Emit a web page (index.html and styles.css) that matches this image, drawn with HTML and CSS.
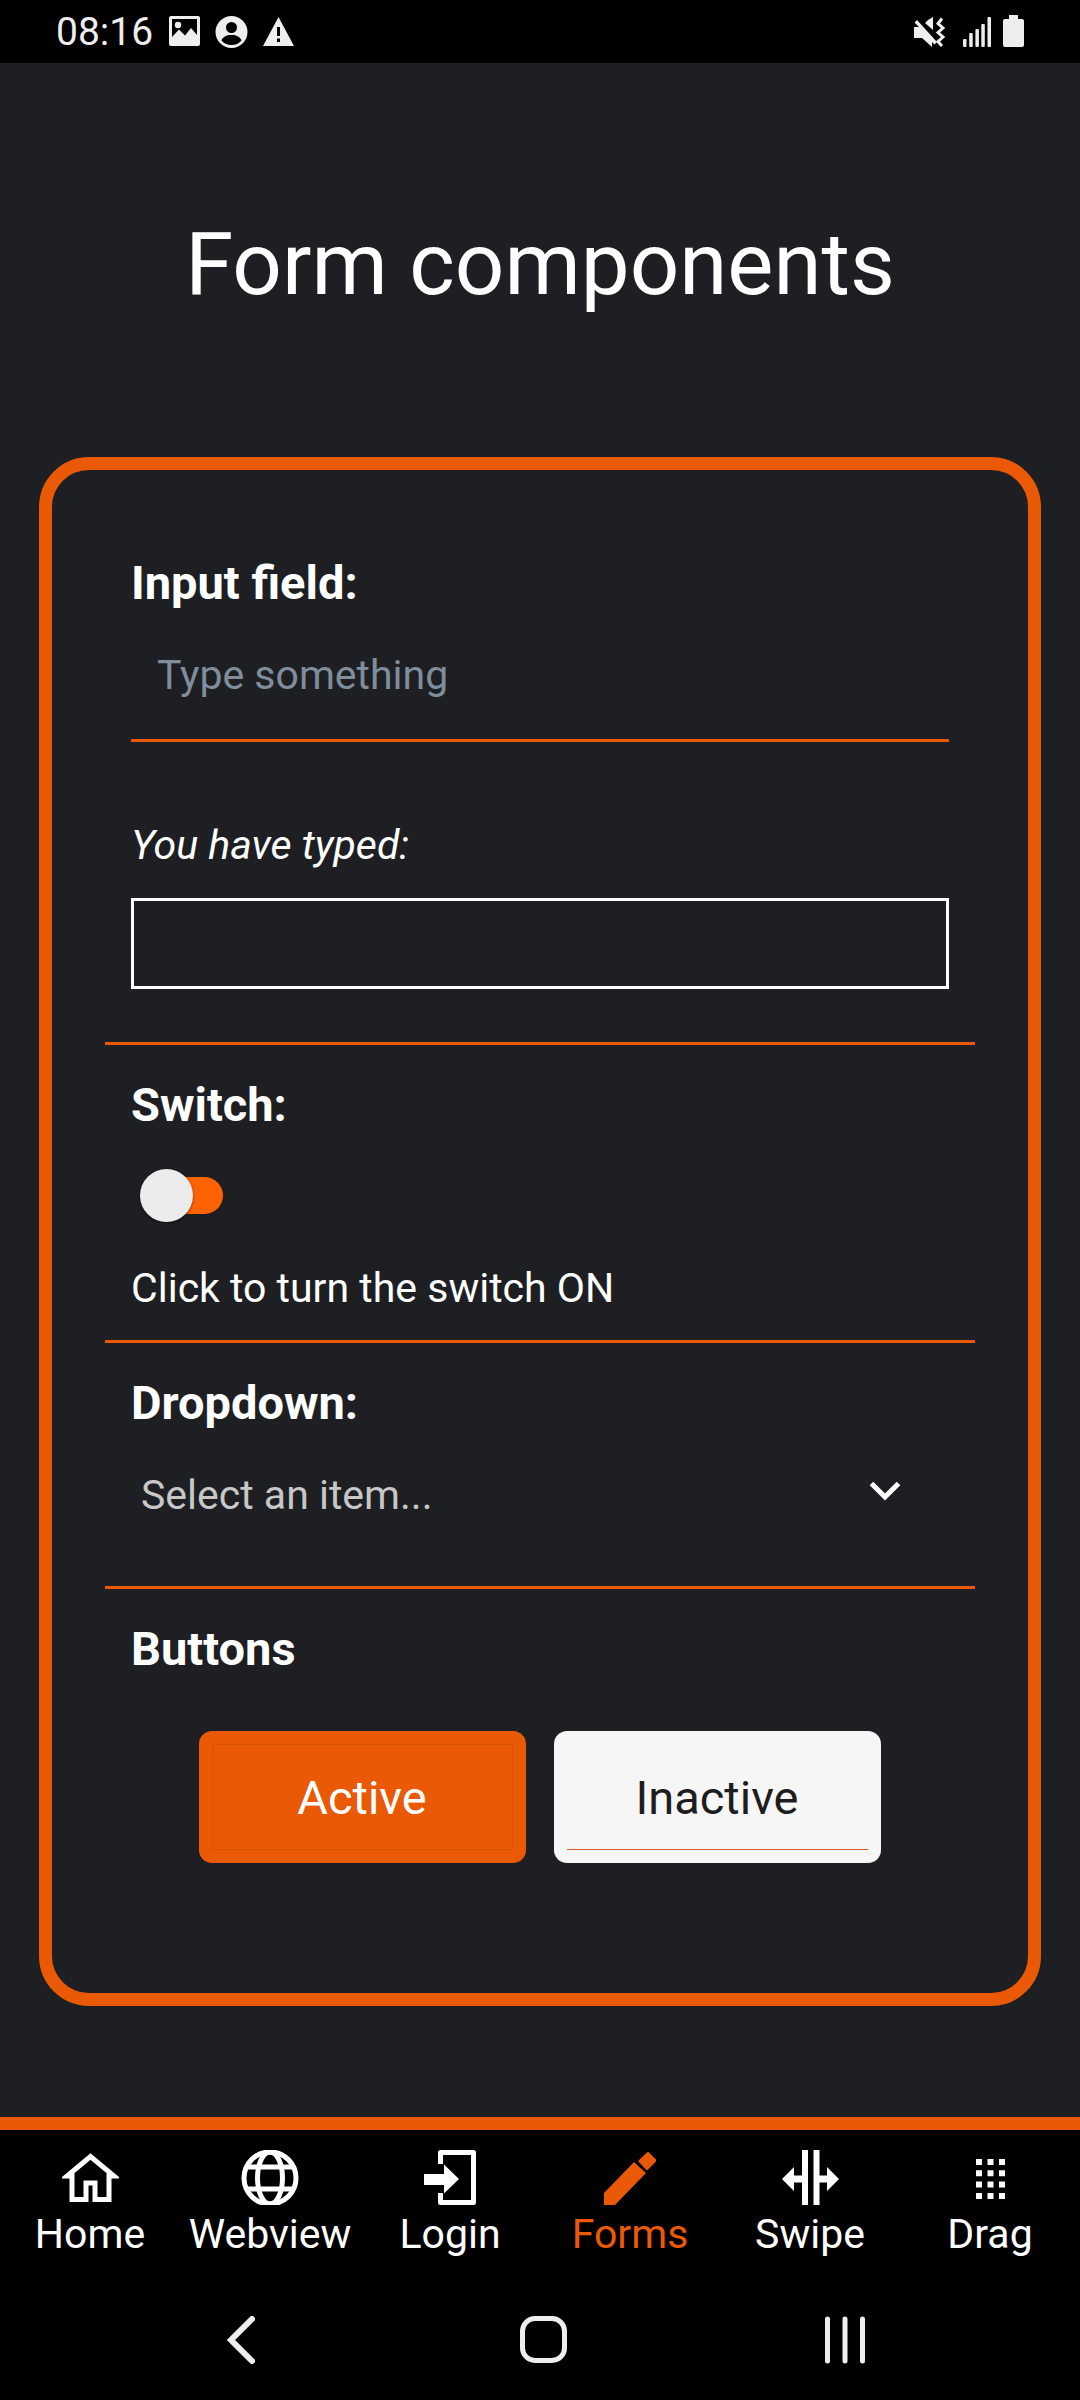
FILE: index.html
```html
<!DOCTYPE html>
<html lang="en">
<head>
<meta charset="utf-8">
<title>Form components</title>
<link rel="stylesheet" href="styles.css">
</head>
<body>
<div class="status">
  <div class="status-left">
    <span class="time">08:16</span>
    <svg class="ic-image" viewBox="0 0 31 30"><path fill-rule="evenodd" d="M2 0H29a2 2 0 0 1 2 2V28a2 2 0 0 1-2 2H2a2 2 0 0 1-2-2V2a2 2 0 0 1 2-2ZM3 3V21L10 13.500 16 19.500 22 12 28 19V3Z"/><circle cx="9" cy="9" r="3.200"/></svg>
    <svg class="ic-person" viewBox="0 0 33 32"><path fill-rule="evenodd" d="M16.500 0a16 16 0 1 1 0 32a16 16 0 1 1 0-32ZM16.500 6a5.500 5.500 0 1 0 0 11a5.500 5.500 0 1 0 0-11ZM16.500 19C11.500 19 7.500 21 6.500 24.500C9 27.500 12.500 29 16.500 29S24 27.500 26.500 24.500C25.500 21 21.500 19 16.500 19Z"/></svg>
    <svg class="ic-warn" viewBox="0 0 31 29"><path fill-rule="evenodd" d="M15.500 0L31 29H0ZM14 10V19H17V10ZM14 21.500V25H17V21.500Z"/></svg>
  </div>
  <div class="status-right">
    <svg class="ic-mute" viewBox="0 0 32 30"><path d="M0 10H5L0.500 5.500 3 3 23 25 20.500 27.500 18 25V30L8 21H0ZM14 3L19 0V13L11 6Z"/><path class="squiggle" d="M28 1.500L24 6.500 29 11 24 15.500 29 20 24 24.500 28 29"/></svg>
    <svg class="ic-signal" viewBox="0 0 28 30"><rect x="0" y="22" width="3.500" height="8" rx="1"/><rect x="6.200" y="16" width="3.500" height="14" rx="1"/><rect x="12.400" y="12" width="3.500" height="18" rx="1"/><rect x="18.300" y="7" width="3.500" height="23" rx="1"/><rect x="24.500" y="0" width="3.500" height="30" rx="1"/></svg>
    <svg class="ic-battery" viewBox="0 0 21 32"><path d="M6 0H15V4H19a2 2 0 0 1 2 2V30a2 2 0 0 1-2 2H2a2 2 0 0 1-2-2V6a2 2 0 0 1 2-2H6Z"/></svg>
  </div>
</div>

<main class="page">
  <h1 class="title">Form components</h1>
  <section class="card">
    <div class="group group-input">
      <div class="label">Input field:</div>
      <div class="field"><span class="placeholder">Type something</span></div>
      <div class="typed-label">You have typed:</div>
      <div class="typed-box"></div>
    </div>
    <div class="group group-switch">
      <div class="label">Switch:</div>
      <div class="switch"><span class="track"></span><span class="thumb"></span></div>
      <div class="body-text">Click to turn the switch ON</div>
    </div>
    <div class="group group-dropdown">
      <div class="label">Dropdown:</div>
      <div class="select">
        <span class="select-text">Select an item...</span>
        <svg class="chevron" viewBox="0 0 32 20"><path d="M2.500 2.500L16 16 29.500 2.500"/></svg>
      </div>
    </div>
    <div class="group group-buttons">
      <div class="label">Buttons</div>
      <div class="buttons">
        <div class="btn btn-active"><span class="btn-inner">Active</span></div>
        <div class="btn btn-inactive"><span class="btn-inner">Inactive</span></div>
      </div>
    </div>
  </section>
</main>

<nav class="tabs">
  <div class="tab">
    <svg class="ic-home" viewBox="0 0 57 55"><path d="M10 49.500V26H5L28.500 6.500 52 26H47V49.500H33V33H24V49.500Z"/></svg>
    <span>Home</span>
  </div>
  <div class="tab">
    <svg class="ic-globe" viewBox="0 0 58 55"><circle cx="29" cy="28" r="26"/><ellipse cx="29" cy="28" rx="12.500" ry="26"/><path d="M6 17H52M6 39H52"/></svg>
    <span>Webview</span>
  </div>
  <div class="tab">
    <svg class="ic-login" viewBox="0 0 54 55"><path class="frame" d="M17.500 14V2.500H50.500V52.500H17.500V43"/><path class="fill" d="M1 24H21V14.500L36 29 21 43.500V35H1Z"/></svg>
    <span>Login</span>
  </div>
  <div class="tab tab-active">
    <svg class="ic-pencil" viewBox="0 0 52 55"><path d="M0 43L30 12 42 23 11 55H0Z"/><path class="cap" d="M36 11L44 3.500 51 10.500 43 18.500Z"/></svg>
    <span>Forms</span>
  </div>
  <div class="tab">
    <svg class="ic-swipe" viewBox="0 0 57 55"><path d="M20 0H26V55H20ZM31.500 0H37.500V55H31.500ZM0 29L12 17V25.500H20V32.500H12V41ZM57 29L45 17V25.500H37.500V32.500H45V41Z"/></svg>
    <span>Swipe</span>
  </div>
  <div class="tab">
    <svg class="ic-drag" viewBox="0 0 29 55"><path d="M0 9H6V15H0ZM11.500 9H17.500V15H11.500ZM23 9H29V15H23ZM0 20.300H6V26.300H0ZM11.500 20.300H17.500V26.300H11.500ZM23 20.300H29V26.300H23ZM0 31.600H6V37.600H0ZM11.500 31.600H17.500V37.600H11.500ZM23 31.600H29V37.600H23ZM0 43H6V49H0ZM11.500 43H17.500V49H11.500ZM23 43H29V49H23Z"/></svg>
    <span>Drag</span>
  </div>
</nav>

<div class="sysnav">
  <svg class="sys-back" viewBox="0 0 28 48"><path d="M25 3L4 24 25 45"/></svg>
  <span class="sys-home"></span>
  <svg class="sys-recent" viewBox="0 0 40 48"><path d="M2.500 3V45M20 3V45M37.500 3V45"/></svg>
</div>
</body>
</html>
```
FILE: styles.css
```css
* { box-sizing: border-box; }
html, body { margin: 0; padding: 0; }
body {
  width: 1080px;
  height: 2400px;
  background: #1e1f23;
  color: #fff;
  font-family: Roboto, "Liberation Sans", sans-serif;
  display: flex;
  flex-direction: column;
  overflow: hidden;
}

/* status bar */
.status {
  height: 63px;
  background: #000;
  display: flex;
  justify-content: space-between;
  align-items: flex-start;
  flex: none;
}
.status svg { fill: #eee; display: block; flex: none; }
.status-left { display: flex; align-items: flex-start; padding: 16px 0 0 56px; }
.status-right { display: flex; align-items: flex-start; padding: 15px 56px 0 0; }
.time { font-size: 39px; line-height: 32px; color: #eee; width: 113px; }
.ic-image { width: 31px; height: 30px; }
.ic-person { width: 33px; height: 32px; margin-left: 15px; }
.ic-warn { width: 31px; height: 29px; margin: 1px 0 0 15px; }
.ic-mute { width: 32px; height: 30px; margin-top: 2px; }
.ic-mute .squiggle { fill: none; stroke: #eee; stroke-width: 3; }
.ic-signal { width: 28px; height: 30px; margin: 2px 0 0 17px; }
.ic-battery { width: 21px; height: 32px; margin-left: 12px; }

/* page */
.page { flex: 1; display: flex; flex-direction: column; align-items: center; }
.title {
  margin: 151px 0 143px;
  font-size: 87px;
  line-height: 100px;
  font-weight: 400;
  text-align: center;
}
.card {
  width: 1002px;
  height: 1549px;
  border: 13px solid #ea5906;
  border-radius: 50px;
  padding: 77px 53px 0;
}
.group { padding: 0 26px; }
.group + .group { border-top: 3px solid #ea5906; }
.label { font-size: 47px; line-height: 52px; font-weight: 700; }

.group-input { height: 495px; padding-top: 10px; }
.field {
  height: 133px;
  border-bottom: 3px solid #ea5906;
  padding: 41px 0 0 26px;
}
.placeholder { font-size: 41px; line-height: 50px; color: #7f8d9c; display: block; }
.typed-label { margin-top: 80px; font-size: 41px; line-height: 46px; font-style: italic; }
.typed-box { margin-top: 30px; height: 91px; border: 3px solid #fff; }

.group-switch { height: 298px; padding-top: 34px; }
.switch { position: relative; width: 90px; height: 52px; margin: 38px 0 0 9px; }
.track {
  position: absolute;
  left: 20px;
  top: 8px;
  width: 63px;
  height: 37px;
  border-radius: 19px;
  background: #ff6200;
}
.thumb {
  position: absolute;
  left: 0;
  top: 0;
  width: 53px;
  height: 53px;
  border-radius: 50%;
  background: #ececec;
  box-shadow: 0 1px 3px rgba(0,0,0,.5);
}
.body-text { margin-top: 42px; font-size: 41px; line-height: 50px; }

.group-dropdown { height: 246px; padding-top: 34px; }
.select { display: flex; justify-content: space-between; align-items: flex-start; padding: 41px 48px 0 10px; }
.select-text { font-size: 41px; line-height: 50px; color: #c7c7c7; }
.chevron { width: 32px; height: 20px; margin-top: 11px; fill: none; stroke: #fff; stroke-width: 5; flex: none; }

.group-buttons { padding-top: 34px; }
.buttons { display: flex; justify-content: center; gap: 28px; margin-top: 56px; padding-right: 1px; }
.btn {
  width: 327px;
  height: 132px;
  border-radius: 13px;
  padding: 13px;
  display: flex;
}
.btn-inner {
  flex: 1;
  display: flex;
  align-items: center;
  justify-content: center;
  padding-top: 2px;
  font-size: 47px;
  line-height: 54px;
}
.btn-active { background: #ea5906; color: #fff; }
.btn-active .btn-inner { border: 1px solid #d65408; }
.btn-inactive { background: #f6f6f6; color: #1d1d1d; }
.btn-inactive .btn-inner { border-bottom: 1px solid #d65a1f; }

/* tabs */
.tabs {
  flex: none;
  height: 182px;
  background: #000;
  border-top: 13px solid #ea5906;
  display: grid;
  grid-template-columns: repeat(6, 180px);
  padding-top: 20px;
}
.tab {
  display: flex;
  flex-direction: column;
  align-items: center;
  font-size: 41px;
  line-height: 48px;
  color: #fff;
}
.tab svg { display: block; height: 55px; flex: none; margin-bottom: 5px; }
.tab span { display: block; }
.tab-active { color: #ea5906; }
.ic-home { width: 57px; fill: none; stroke: #fff; stroke-width: 5; }
.ic-globe { width: 58px; fill: none; stroke: #fff; stroke-width: 5; }
.ic-login { width: 54px; }
.ic-login .frame { fill: none; stroke: #fff; stroke-width: 5; stroke-linejoin: round; }
.ic-login .fill { fill: #fff; }
.ic-pencil { width: 52px; fill: #ea5906; }
.ic-pencil .cap { stroke: #ea5906; stroke-width: 3; stroke-linejoin: round; }
.ic-swipe { width: 57px; fill: #fff; }
.ic-drag { width: 29px; fill: #fff; }

/* system nav */
.sysnav {
  flex: none;
  height: 101px;
  background: #000;
  display: flex;
  align-items: flex-start;
  padding: 17px 0 0 227px;
}
.sys-back { width: 28px; height: 48px; fill: none; stroke: #eee; stroke-width: 6; stroke-linecap: round; flex: none; }
.sys-home {
  width: 47px;
  height: 47px;
  margin: 0 0 0 265px;
  border: 5px solid #eee;
  border-radius: 15px;
  flex: none;
}
.sys-recent { width: 40px; height: 48px; margin-left: 258px; fill: none; stroke: #eee; stroke-width: 5; stroke-linecap: round; flex: none; }
```
